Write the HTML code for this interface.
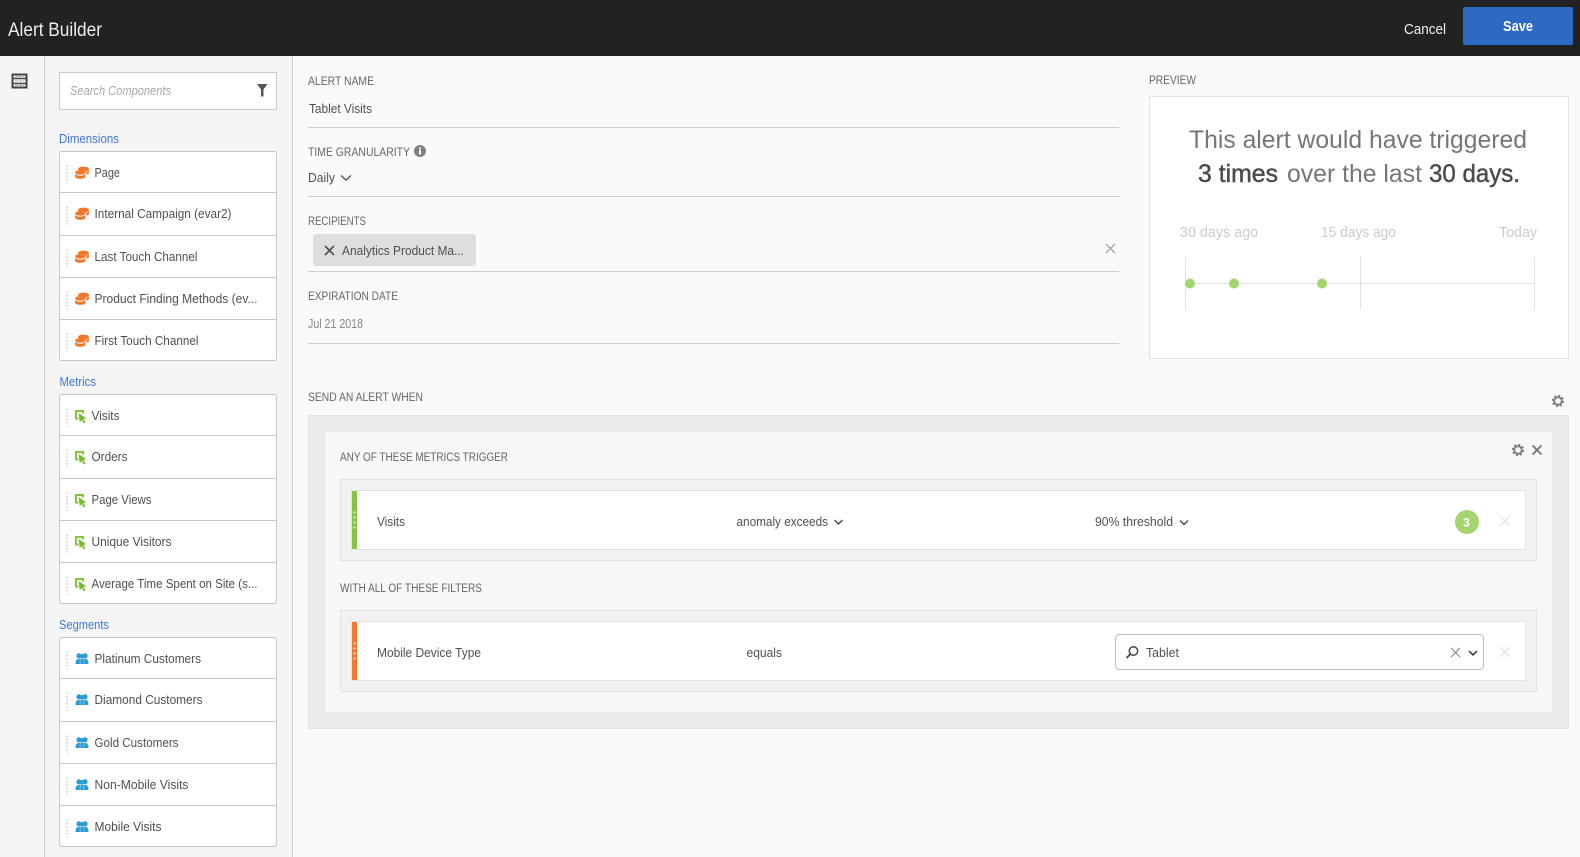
<!DOCTYPE html>
<html><head><meta charset="utf-8"><title>Alert Builder</title>
<style>
html,body{margin:0;padding:0;width:1580px;height:857px;overflow:hidden;background:#fafafa;font-family:"Liberation Sans",sans-serif}
.b{position:absolute;box-sizing:border-box}
svg.o{position:absolute;left:0;top:0}
text{font-family:"Liberation Sans",sans-serif}
.c{font-size:11.5px;fill:#666}
.t{font-size:13px;fill:#505050}
.h{font-size:13px;fill:#3f76d4}
.p{font-size:25px;fill:#767676}
.s{font-size:25px;fill:#4a4a4a;stroke:#4a4a4a;stroke-width:.45}
.l{font-size:14.5px;fill:#cbcbcb}
.g{stroke:#d6d6d6;stroke-width:2;stroke-dasharray:1.5 1.9;fill:none}
</style></head><body>
<div class="b" style="left:0;top:0;width:1580px;height:56px;background:#222"></div>
<div class="b" style="left:1463px;top:7px;width:110px;height:38px;background:#2d6ac4;border-radius:2px"></div>
<div class="b" style="left:0;top:56px;width:293px;height:801px;background:#f5f5f5;border-right:1px solid #cfcfcf"></div>
<div class="b" style="left:44px;top:56px;width:1px;height:801px;background:#cfcfcf"></div>
<div class="b" style="left:59px;top:72px;width:218px;height:38px;background:#fff;border:1px solid #cacaca"></div>

<div class="b" style="left:59px;top:151px;width:218px;height:210px;background:#fff;border:1px solid #c4c4c4;border-radius:3px"></div>
<div class="b" style="left:60px;top:192px;width:216px;height:1px;background:#c8c8c8"></div>
<div class="b" style="left:60px;top:235px;width:216px;height:1px;background:#c8c8c8"></div>
<div class="b" style="left:60px;top:277px;width:216px;height:1px;background:#c8c8c8"></div>
<div class="b" style="left:60px;top:319px;width:216px;height:1px;background:#c8c8c8"></div>

<div class="b" style="left:59px;top:394px;width:218px;height:210px;background:#fff;border:1px solid #c4c4c4;border-radius:3px"></div>
<div class="b" style="left:60px;top:435px;width:216px;height:1px;background:#c8c8c8"></div>
<div class="b" style="left:60px;top:478px;width:216px;height:1px;background:#c8c8c8"></div>
<div class="b" style="left:60px;top:520px;width:216px;height:1px;background:#c8c8c8"></div>
<div class="b" style="left:60px;top:562px;width:216px;height:1px;background:#c8c8c8"></div>

<div class="b" style="left:59px;top:637px;width:218px;height:210px;background:#fff;border:1px solid #c4c4c4;border-radius:3px"></div>
<div class="b" style="left:60px;top:678px;width:216px;height:1px;background:#c8c8c8"></div>
<div class="b" style="left:60px;top:721px;width:216px;height:1px;background:#c8c8c8"></div>
<div class="b" style="left:60px;top:763px;width:216px;height:1px;background:#c8c8c8"></div>
<div class="b" style="left:60px;top:805px;width:216px;height:1px;background:#c8c8c8"></div>

<div class="b" style="left:308px;top:127px;width:811px;height:1px;background:#cdcdcd"></div>
<div class="b" style="left:308px;top:196px;width:811px;height:1px;background:#cdcdcd"></div>
<div class="b" style="left:308px;top:271px;width:811px;height:1px;background:#cdcdcd"></div>
<div class="b" style="left:308px;top:343px;width:811px;height:1px;background:#cdcdcd"></div>
<div class="b" style="left:313px;top:234px;width:163px;height:32px;background:#dedede;border-radius:3px"></div>

<div class="b" style="left:1149px;top:96px;width:420px;height:263px;background:#fff;border:1px solid #e3e3e3"></div>

<div class="b" style="left:308px;top:415px;width:1261px;height:314px;background:#ebebeb;border:1px solid #e3e3e3"></div>
<div class="b" style="left:324px;top:431px;width:1229px;height:282px;background:#f7f7f7;border:1px solid #e6e6e6"></div>
<div class="b" style="left:340px;top:479px;width:1197px;height:82px;background:#f1f1f1;border:1px solid #e3e3e3"></div>
<div class="b" style="left:351px;top:490px;width:1175px;height:60px;background:#fff;border:1px solid #e3e3e3"></div>
<div class="b" style="left:352px;top:491px;width:5px;height:58px;background:#85c43e"></div>
<div class="b" style="left:340px;top:610px;width:1197px;height:82px;background:#f1f1f1;border:1px solid #e3e3e3"></div>
<div class="b" style="left:351px;top:621px;width:1175px;height:60px;background:#fff;border:1px solid #e3e3e3"></div>
<div class="b" style="left:352px;top:622px;width:5px;height:58px;background:#f3762b"></div>
<div class="b" style="left:1115px;top:634px;width:369px;height:36px;background:#fff;border:1px solid #bdbdbd;border-radius:4px"></div>

<svg class="o" width="1580" height="857" viewBox="0 0 1580 857" xmlns="http://www.w3.org/2000/svg">
<defs>
<g id="coin" fill="#f0772c"><ellipse cx="8.500" cy="2.500" rx="5.500" ry="2.400"/><path d="M10.500 5.100C12 4.900 13.300 4.400 14 3.600V6.200C14 7.100 13 7.800 11.500 8.100V6.700C11.500 6 11.200 5.500 10.500 5.100Z"/><ellipse cx="5.300" cy="5.900" rx="5.200" ry="2.300"/><path d="M.1 7.400C1 8.600 3 9.200 5.300 9.200S9.600 8.600 10.500 7.400V10.100C10.500 11.400 8.100 12.300 5.300 12.300S.1 11.400 .1 10.100Z"/></g>
<g id="met"><path d="M0 0H9V3.500H7V2H2V7.500H3.500V9.500H0Z" fill="#85c43e"/><path d="M3.500 3L11.300 8.300 8.300 9 10.500 12.500 8.800 13.500 6.800 10 4.800 12.300Z" fill="#78bb33"/></g>
<g id="seg" fill="#2d9bd6"><circle cx="3.400" cy="2.800" r="2.500"/><circle cx="9.600" cy="2.800" r="2.500"/><circle cx="6.500" cy="3.200" r="2.200"/><path d="M0 10.200C0 7.600 1.500 5.800 3.400 5.800H9.600C11.500 5.800 13 7.600 13 10.200 13 10.800 12.700 11 12.200 11H.8C.3 11 0 10.800 0 10.200Z"/><path d="M4.700 6V10.500M8.300 6V10.500" stroke="#8fcbea" stroke-width=".8"/></g>
<path id="grip" class="g" d="M0 0V18"/>
<g id="gear"><circle r="5.100" fill="none" stroke="#7d7d7d" stroke-width="2.100" stroke-dasharray="2 2.005"/><circle r="3.800" fill="none" stroke="#7d7d7d" stroke-width="1.800"/></g>
</defs>

<!-- header -->
<text x="8" y="36" font-size="19.500" fill="#ececec" textLength="94" lengthAdjust="spacingAndGlyphs">Alert Builder</text>
<text x="1404" y="34" font-size="14.500" fill="#eee" textLength="42" lengthAdjust="spacingAndGlyphs">Cancel</text>
<text x="1503" y="31" font-size="14.500" font-weight="bold" fill="#fff" textLength="30" lengthAdjust="spacingAndGlyphs">Save</text>

<!-- rail -->
<path d="M12.500 74.500H26.500V87.500H12.500Z" fill="none" stroke="#444" stroke-width="2"/>
<path d="M13 78.500H26M13 83.500H26" stroke="#444" stroke-width="1.500"/>
<path d="M15 76.500H24M15 81H24M15 85.500H24" stroke="#aaa" stroke-width="1" stroke-dasharray="3 1"/>

<!-- search -->
<text x="70" y="95" font-size="13" font-style="italic" fill="#a8a8a8" textLength="101" lengthAdjust="spacingAndGlyphs">Search Components</text>
<path d="M257 84H267.500L263.500 89.500V96.500H261V89.500Z" fill="#555"/>

<!-- sidebar headers -->
<text class="h" x="59" y="143" textLength="60" lengthAdjust="spacingAndGlyphs">Dimensions</text>
<text class="h" x="59.500" y="386" textLength="36.500" lengthAdjust="spacingAndGlyphs">Metrics</text>
<text class="h" x="59" y="629" textLength="50" lengthAdjust="spacingAndGlyphs">Segments</text>

<!-- dimensions -->
<use href="#grip" x="67" y="165.500"/><use href="#coin" x="75" y="166.500"/>
<text class="t" x="94.500" y="177" textLength="25.500" lengthAdjust="spacingAndGlyphs">Page</text>
<use href="#grip" x="67" y="206.500"/><use href="#coin" x="75" y="207.500"/>
<text class="t" x="94.500" y="218" textLength="137" lengthAdjust="spacingAndGlyphs">Internal Campaign (evar2)</text>
<use href="#grip" x="67" y="249.500"/><use href="#coin" x="75" y="250.500"/>
<text class="t" x="94.500" y="261" textLength="103" lengthAdjust="spacingAndGlyphs">Last Touch Channel</text>
<use href="#grip" x="67" y="291.500"/><use href="#coin" x="75" y="292.500"/>
<text class="t" x="94.500" y="303" textLength="163" lengthAdjust="spacingAndGlyphs">Product Finding Methods (ev...</text>
<use href="#grip" x="67" y="333.500"/><use href="#coin" x="75" y="334.500"/>
<text class="t" x="94.500" y="345" textLength="104" lengthAdjust="spacingAndGlyphs">First Touch Channel</text>

<!-- metrics -->
<use href="#grip" x="67" y="408.500"/><use href="#met" x="75" y="410"/>
<text class="t" x="91.500" y="420" textLength="28" lengthAdjust="spacingAndGlyphs">Visits</text>
<use href="#grip" x="67" y="449.500"/><use href="#met" x="75" y="451"/>
<text class="t" x="91.500" y="461" textLength="36" lengthAdjust="spacingAndGlyphs">Orders</text>
<use href="#grip" x="67" y="492.500"/><use href="#met" x="75" y="494"/>
<text class="t" x="91.500" y="504" textLength="60" lengthAdjust="spacingAndGlyphs">Page Views</text>
<use href="#grip" x="67" y="534.500"/><use href="#met" x="75" y="536"/>
<text class="t" x="91.500" y="546" textLength="80" lengthAdjust="spacingAndGlyphs">Unique Visitors</text>
<use href="#grip" x="67" y="576.500"/><use href="#met" x="75" y="578"/>
<text class="t" x="91.500" y="588" textLength="166" lengthAdjust="spacingAndGlyphs">Average Time Spent on Site (s...</text>

<!-- segments -->
<use href="#grip" x="67" y="651.500"/><use href="#seg" x="75.500" y="653"/>
<text class="t" x="94.500" y="663" textLength="106.500" lengthAdjust="spacingAndGlyphs">Platinum Customers</text>
<use href="#grip" x="67" y="692.500"/><use href="#seg" x="75.500" y="694"/>
<text class="t" x="94.500" y="704" textLength="108" lengthAdjust="spacingAndGlyphs">Diamond Customers</text>
<use href="#grip" x="67" y="735.500"/><use href="#seg" x="75.500" y="737"/>
<text class="t" x="94.500" y="747" textLength="84" lengthAdjust="spacingAndGlyphs">Gold Customers</text>
<use href="#grip" x="67" y="777.500"/><use href="#seg" x="75.500" y="779"/>
<text class="t" x="94.500" y="789" textLength="94" lengthAdjust="spacingAndGlyphs">Non-Mobile Visits</text>
<use href="#grip" x="67" y="819.500"/><use href="#seg" x="75.500" y="821"/>
<text class="t" x="94.500" y="831" textLength="67" lengthAdjust="spacingAndGlyphs">Mobile Visits</text>

<!-- form -->
<text class="c" x="308" y="85" textLength="66" lengthAdjust="spacingAndGlyphs">ALERT NAME</text>
<text class="t" x="309" y="113" textLength="63" lengthAdjust="spacingAndGlyphs">Tablet Visits</text>
<text class="c" x="308" y="156" textLength="102" lengthAdjust="spacingAndGlyphs">TIME GRANULARITY</text>
<circle cx="420" cy="151" r="6" fill="#808080"/><rect x="419" y="150" width="2" height="4.500" fill="#fafafa"/><rect x="419" y="147.500" width="2" height="1.800" fill="#fafafa"/>
<text class="t" x="308" y="182" textLength="27" lengthAdjust="spacingAndGlyphs">Daily</text>
<path d="M341 175.500L346 180 351 175.500" fill="none" stroke="#555" stroke-width="1.400"/>
<text class="c" x="308" y="225" textLength="58" lengthAdjust="spacingAndGlyphs">RECIPIENTS</text>
<path d="M325 246L334 255M334 246L325 255" stroke="#555" stroke-width="1.800"/>
<text class="t" x="342" y="255" textLength="122" lengthAdjust="spacingAndGlyphs">Analytics Product Ma...</text>
<path d="M1106 244L1115 253M1115 244L1106 253" stroke="#999" stroke-width="1.200"/>
<text class="c" x="308" y="300" textLength="90" lengthAdjust="spacingAndGlyphs">EXPIRATION DATE</text>
<text class="t" x="308" y="328" style="fill:#888" textLength="55" lengthAdjust="spacingAndGlyphs">Jul 21 2018</text>

<!-- preview -->
<text class="c" x="1149" y="84" textLength="47" lengthAdjust="spacingAndGlyphs">PREVIEW</text>
<text class="p" x="1189" y="148" textLength="338" lengthAdjust="spacingAndGlyphs">This alert would have triggered</text>
<text class="s" x="1198" y="182" textLength="80" lengthAdjust="spacingAndGlyphs">3 times</text>
<text class="p" x="1287" y="182" textLength="135" lengthAdjust="spacingAndGlyphs">over the last</text>
<text class="s" x="1429" y="182" textLength="91" lengthAdjust="spacingAndGlyphs">30 days.</text>
<text class="l" x="1180" y="237" textLength="78" lengthAdjust="spacingAndGlyphs">30 days ago</text>
<text class="l" x="1321" y="237" textLength="75" lengthAdjust="spacingAndGlyphs">15 days ago</text>
<text class="l" x="1499" y="237" textLength="38" lengthAdjust="spacingAndGlyphs">Today</text>
<path d="M1185.500 257V310M1360.500 257V310M1534.500 257V310M1185 283.500H1535" stroke="#e2e2e2" stroke-width="1" fill="none"/>
<circle cx="1190" cy="283.500" r="5" fill="#a5d56f"/><circle cx="1234" cy="283.500" r="5" fill="#a5d56f"/><circle cx="1322" cy="283.500" r="5" fill="#a5d56f"/>

<!-- alert -->
<text class="c" x="308" y="401" textLength="115" lengthAdjust="spacingAndGlyphs">SEND AN ALERT WHEN</text>
<use href="#gear" x="1558" y="401"/>
<use href="#gear" x="1518" y="450"/>
<path d="M1532.500 445.500L1541.500 454.500M1541.500 445.500L1532.500 454.500" stroke="#777" stroke-width="1.800"/>
<text class="c" x="340" y="461" textLength="168" lengthAdjust="spacingAndGlyphs">ANY OF THESE METRICS TRIGGER</text>
<text class="c" x="340" y="592" textLength="142" lengthAdjust="spacingAndGlyphs">WITH ALL OF THESE FILTERS</text>

<g fill="#cfe9ae"><circle cx="354.500" cy="512.500" r="1.200"/><circle cx="354.500" cy="517.500" r="1.200"/><circle cx="354.500" cy="522.500" r="1.200"/><circle cx="354.500" cy="527.500" r="1.200"/></g>
<g fill="#fbd0b5"><circle cx="354.500" cy="643.500" r="1.200"/><circle cx="354.500" cy="648.500" r="1.200"/><circle cx="354.500" cy="653.500" r="1.200"/><circle cx="354.500" cy="658.500" r="1.200"/></g>

<text class="t" x="377" y="526" textLength="28" lengthAdjust="spacingAndGlyphs">Visits</text>
<text class="t" x="736.500" y="526" textLength="91.500" lengthAdjust="spacingAndGlyphs">anomaly exceeds</text>
<path d="M834.500 520L838.500 524 842.500 520" fill="none" stroke="#444" stroke-width="1.400"/>
<text class="t" x="1095" y="526" textLength="78" lengthAdjust="spacingAndGlyphs">90% threshold</text>
<path d="M1180 520.500L1184 524.500 1188 520.500" fill="none" stroke="#444" stroke-width="1.400"/>
<circle cx="1467" cy="522" r="12" fill="#a5d56f"/>
<text x="1466.500" y="526.500" font-size="12" font-weight="bold" fill="#fff" text-anchor="middle">3</text>
<path d="M1500 516L1510 526M1510 516L1500 526" stroke="#e6e6e6" stroke-width="1.500"/>

<text class="t" x="377" y="657" textLength="104" lengthAdjust="spacingAndGlyphs">Mobile Device Type</text>
<text class="t" x="746.500" y="657" textLength="35.500" lengthAdjust="spacingAndGlyphs">equals</text>
<circle cx="1133.500" cy="651" r="4.200" fill="none" stroke="#444" stroke-width="1.500"/>
<path d="M1130.500 654L1126.500 658" stroke="#444" stroke-width="1.800"/>
<text class="t" x="1146" y="657" textLength="33" lengthAdjust="spacingAndGlyphs">Tablet</text>
<path d="M1451 648L1460 657M1460 648L1451 657" stroke="#888" stroke-width="1.200"/>
<path d="M1469 651L1473 655 1477 651" fill="none" stroke="#333" stroke-width="1.500"/>
<path d="M1500 647L1510 657M1510 647L1500 657" stroke="#e6e6e6" stroke-width="1.500"/>
</svg>
</body></html>
